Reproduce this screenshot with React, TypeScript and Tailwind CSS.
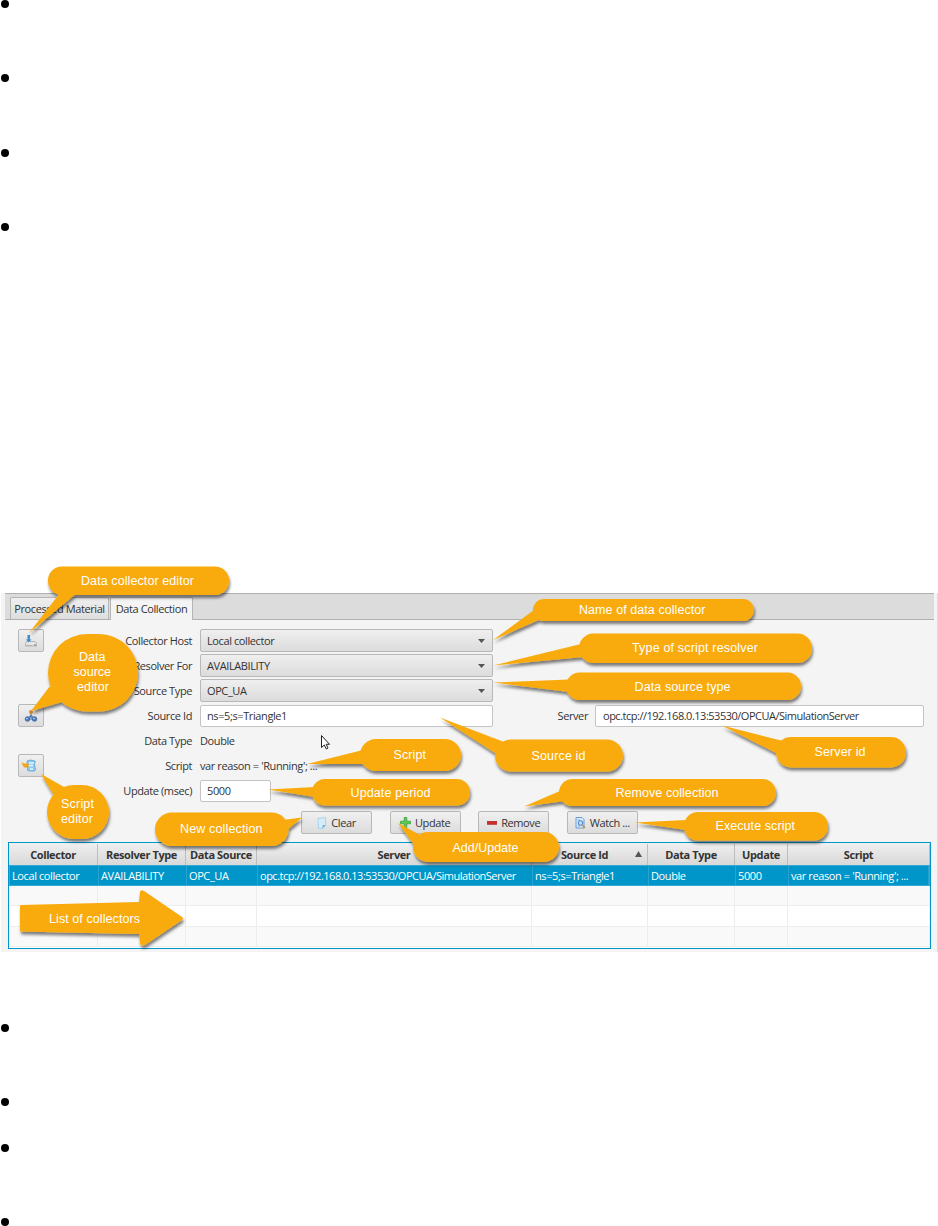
import type { ReactNode } from 'react'

const fields = [
  { label: 'Collector Host', value: 'Local collector' },
  { label: 'Resolver For', value: 'AVAILABILITY' },
  { label: 'Source Type', value: 'OPC_UA' },
]

const columns = [
  { title: 'Collector', value: 'Local collector' },
  { title: 'Resolver Type', value: 'AVAILABILITY' },
  { title: 'Data Source', value: 'OPC_UA' },
  { title: 'Server', value: 'opc.tcp://192.168.0.13:53530/OPCUA/SimulationServer' },
  { title: 'Source Id', value: 'ns=5;s=Triangle1', sorted: true },
  { title: 'Data Type', value: 'Double' },
  { title: 'Update', value: '5000' },
  { title: 'Script', value: "var reason = 'Running'; ..." },
]

const tableGrid = 'grid grid-cols-[89px_88px_71px_275px_116px_87px_53px_1fr]'

type Line = { text: string; x: number; y: number; w: number }
type Callout = {
  x: number
  y: number
  w: number
  h: number
  r: number
  tail: string
  lines: Line[]
}

// Coordinates are relative to the top left corner of the editor window
const callouts: Callout[] = [
  { x: 48, y: -26.5, w: 181, h: 28.5, r: 14, tail: '60,0 29,40 77,0', lines: [{ text: 'Data collector editor', x: 81, y: -8.5, w: 113 }] },
  { x: 48, y: 41, w: 90, h: 77.5, r: 39, tail: '50,93 31,118 62,109', lines: [
    { text: 'Data', x: 79, y: 68, w: 26.5 },
    { text: 'source', x: 73.5, y: 83, w: 37.5 },
    { text: 'editor', x: 77, y: 98, w: 32 },
  ] },
  { x: 47, y: 192, w: 62, h: 54, r: 27, tail: '53,201 41,181 64,194', lines: [
    { text: 'Script', x: 61, y: 215, w: 33 },
    { text: 'editor', x: 61, y: 230, w: 32 },
  ] },
  { x: 155, y: 219.5, w: 133.5, h: 33.5, r: 17, tail: '283,227 302,224.5 286,238', lines: [{ text: 'New collection', x: 180, y: 240, w: 82.5 }] },
  { x: 533, y: 6, w: 221, h: 22, r: 11, tail: '534,17 493,47 541,26 541,15', lines: [{ text: 'Name of data collector', x: 579, y: 20.5, w: 126.5 }] },
  { x: 579, y: 40.5, w: 233, h: 29.5, r: 14.5, tail: '581,51 493,72.5 583,64', lines: [{ text: 'Type of script resolver', x: 632, y: 59, w: 126 }] },
  { x: 566, y: 79.5, w: 235, h: 27.5, r: 13.5, tail: '569,86.5 493,89.5 569,99', lines: [{ text: 'Data source type', x: 634.5, y: 97.5, w: 96 }] },
  { x: 360, y: 146, w: 101, h: 32, r: 16, tail: '363,157 307,171 363,171', lines: [{ text: 'Script', x: 393.5, y: 166, w: 32.5 }] },
  { x: 495, y: 146.5, w: 128, h: 32, r: 16, tail: '504,149 440,124.5 498,162', lines: [{ text: 'Source id', x: 531.5, y: 166.5, w: 54 }] },
  { x: 776, y: 144, w: 130, h: 30.5, r: 15, tail: '783,148 722,132.5 778,161', lines: [{ text: 'Server id', x: 814.5, y: 162.5, w: 51 }] },
  { x: 312, y: 186, w: 158, h: 26.5, r: 13, tail: '315,194 268,196.5 315,204', lines: [{ text: 'Update period', x: 350.5, y: 204, w: 80 }] },
  { x: 559, y: 186, w: 217, h: 27, r: 13.5, tail: '560,198 524,213.5 565,208', lines: [{ text: 'Remove collection', x: 615.5, y: 204, w: 103 }] },
  { x: 684, y: 219, w: 144, h: 28.5, r: 14, tail: '686,227 635,229.5 686,237', lines: [{ text: 'Execute script', x: 715.5, y: 237, w: 79.5 }] },
  { x: 413, y: 239, w: 146, h: 30, r: 15, tail: '420,242 398,230 414,252', lines: [{ text: 'Add/Update', x: 452.5, y: 258.5, w: 66 }] },
]

function CalloutLayer() {
  return (
    <svg
      className="absolute top-0 left-0 overflow-visible pointer-events-none font-['Liberation_Sans',Arial,sans-serif] text-[12.5px] tracking-normal"
      width="938"
      height="359"
    >
      <defs>
        <filter id="callout-shadow" x="-20%" y="-30%" width="140%" height="170%">
          <feDropShadow dx="1" dy="3" stdDeviation="1.5" floodColor="#000" floodOpacity="0.5" />
        </filter>
      </defs>
      {callouts.map((c, i) => (
        <g key={i}>
          <g fill="#f9ab0a" filter="url(#callout-shadow)">
            <rect x={c.x} y={c.y} width={c.w} height={c.h} rx={c.r} />
            <polygon points={c.tail} />
          </g>
          {c.lines.map((line) => (
            <text key={line.text} x={line.x} y={line.y} textLength={line.w} fill="#fff">
              {line.text}
            </text>
          ))}
        </g>
      ))}
      <path
        d="M21 312 L139 309 L140 299 Q141 296 144 298 L182 324 Q184 325.500 182 327 L145 352 Q141 354 140 350 L139 341 L21 338.500 Q20 338.500 20 337.500 V313 Q20 312 21 312 Z"
        fill="#f9ab0a"
        filter="url(#callout-shadow)"
      />
      <text x="49" y="329.500" textLength="91" fill="#fff">List of collectors</text>
      {/* Mouse pointer */}
      <path
        d="M321.500 142.500 V154.500 L324.300 152 L326.300 156 L328 155 L326.200 151.300 H329.500 Z"
        fill="#fff"
        stroke="#222"
        strokeWidth="1"
      />
    </svg>
  )
}

function CollectorIcon() {
  return (
    <svg width="14" height="14" viewBox="0 0 14 14">
      <path d="M2.500 7.500 H11 L12.500 9.500 V12 H1.500 V9.500 Z" fill="#e6e6e6" stroke="#a5a5a5" strokeWidth="0.700" />
      <path d="M2 11.500 H8" stroke="#b5b5b5" />
      <path d="M10 11 H12" stroke="#777" />
      <path d="M3.500 1 H6 V5.500 H7.500 L4.700 8.500 L2 5.500 H3.500 Z" fill="#3d8fd1" />
    </svg>
  )
}

function SourceIcon() {
  return (
    <svg width="14" height="14" viewBox="0 0 14 14">
      <path d="M7 4 V7 M7 6 L3 10 M7 6 L11 10 M3 10 H11" stroke="#56709c" fill="none" />
      <circle cx="7" cy="3" r="2" fill="#d9892b" />
      <circle cx="3.500" cy="10" r="2.300" fill="#4c7fc4" stroke="#2d5793" strokeWidth="0.700" />
      <circle cx="10.500" cy="10" r="2.300" fill="#4c7fc4" stroke="#2d5793" strokeWidth="0.700" />
      <circle cx="7" cy="7.500" r="1.500" fill="#5b84bb" />
      <circle cx="3" cy="9.500" r="0.800" fill="#c8dcf5" />
      <circle cx="10" cy="9.500" r="0.800" fill="#c8dcf5" />
    </svg>
  )
}

function ScriptIcon() {
  return (
    <svg className="-ml-[4px] shrink-0" width="16" height="14" viewBox="0 0 16 14">
      <path d="M6 2 L9 1 L14 2 Q15 3 13.500 4.500 L14 8.500 Q15.500 10.500 13.500 12 H8 Q5.500 11.500 6.500 9.500 Z" fill="#8fcbee" stroke="#58a5d3" strokeWidth="0.800" />
      <path d="M8 4 H13 M8 6.500 H12 M9 10 H12" stroke="#e3f4fd" strokeWidth="1.300" />
      <path d="M0.500 3 L3 4.500 H7.500 V8.500 H3.500 L2 7 Z" fill="#f2a516" />
    </svg>
  )
}

function ToolButton({ children }: { children: ReactNode }) {
  return (
    <button className="w-[26px] h-[23px] flex items-center justify-center rounded-[2px] border border-[#b8b8b8] bg-linear-to-b from-[#f0f0f0] to-[#dcdcdc]">
      {children}
    </button>
  )
}

function ActionButton({ icon, label }: { icon: ReactNode; label: string }) {
  return (
    <button className="w-[71px] h-[23px] flex items-center justify-center gap-[4px] rounded-[2px] border border-[#b8b8b8] bg-linear-to-b from-[#f0f0f0] to-[#dcdcdc] whitespace-nowrap">
      {icon}
      {label}
    </button>
  )
}

function FormRow({ label, children }: { label: string; children: ReactNode }) {
  return (
    <div className="flex h-[25px] items-center">
      <span className="w-[192px] text-right mr-[8px]">{label}</span>
      {children}
    </div>
  )
}

function TabBar() {
  return (
    <div className="ml-[5px] mr-[3px] h-[27px] flex items-end gap-px pl-[5px] bg-[#dcdcdc] border-y border-[#b0b0b0]">
      <div className="w-[99px] h-[22px] flex items-center justify-center border border-b-0 border-[#b5b5b5] rounded-t-[2px] bg-linear-to-b from-[#efefef] to-[#dedede] whitespace-nowrap">
        Processed Material
      </div>
      <div className="w-[83px] h-[23px] -mb-px flex items-center justify-center border border-b-0 border-[#b5b5b5] rounded-t-[2px] bg-[#f4f4f4] whitespace-nowrap">
        Data Collection
      </div>
    </div>
  )
}

function CollectorTable() {
  return (
    <div className="ml-[8px] w-[923px] h-[107px] border border-[#0096c9] bg-white">
      <div className={`${tableGrid} h-[22px] pt-px bg-linear-to-b from-[#f0f0f0] to-[#d8d8d8] font-bold`}>
        {columns.map((col) => (
          <div key={col.title} className="relative flex items-center justify-center border-r border-[#bdbdbd]">
            <span className={col.sorted ? 'mr-[10px]' : ''}>{col.title}</span>
            {col.sorted && (
              <svg className="absolute right-[5px] top-[7px]" width="7" height="6" viewBox="0 0 7 6">
                <path d="M3.500 0 L7 6 H0 Z" fill="#555" />
              </svg>
            )}
          </div>
        ))}
      </div>
      <div className={`${tableGrid} h-[21px] bg-[#0096c9] border border-[#35a9d6] text-white`}>
        {columns.map((col) => (
          <div
            key={col.title}
            className={`flex items-center pl-[2px] border-r border-[#2aa2cf] whitespace-nowrap ${col.title === 'Server' ? 'tracking-[-0.49px]' : ''}`}
          >
            {col.value}
          </div>
        ))}
      </div>
      {['bg-[#f9f9f9]', 'bg-white', 'bg-[#f9f9f9]'].map((bg, i) => (
        <div key={i} className={`${tableGrid} ${bg} ${i === 1 ? 'h-[21px]' : 'h-[20px]'} border-b border-[#ededed]`}>
          {columns.map((col) => (
            <div key={col.title} className="border-r border-[#ededed]" />
          ))}
        </div>
      ))}
    </div>
  )
}

const clearIcon = (
  <svg width="10" height="12" viewBox="0 0 10 12">
    <path d="M1 1.500 L8.500 0.500 V8.500 L6 11.500 H1.500 Z" fill="#d5ecfa" stroke="#9ccbe8" strokeWidth="0.800" />
    <path d="M5 11.500 L6 8 H8.500 Z" fill="#58a9dc" />
  </svg>
)

const addIcon = (
  <svg width="11" height="11" viewBox="0 0 11 11">
    <path d="M4.200 0.500 H6.800 V4.200 H10.500 V6.800 H6.800 V10.500 H4.200 V6.800 H0.500 V4.200 H4.200 Z" fill="#5ccb4f" stroke="#2f9a35" strokeWidth="0.700" />
  </svg>
)

const removeIcon = (
  <svg width="10" height="4" viewBox="0 0 10 4">
    <rect x="0.300" y="0.300" width="9.400" height="3" fill="#cf2c2c" stroke="#a81e22" strokeWidth="0.600" />
  </svg>
)

const watchIcon = (
  <svg width="11" height="12" viewBox="0 0 11 12">
    <path d="M1 0.500 H7 L9 2.500 V11 H1 Z" fill="#dcecfb" stroke="#5d93cf" strokeWidth="0.900" />
    <path d="M2.500 3 H5 M2.500 9 H5" stroke="#7fa9d8" />
    <circle cx="5.500" cy="6" r="2.300" fill="#bfe0fa" stroke="#3f7cc4" />
    <path d="M7.300 8 L10 11" stroke="#c09254" strokeWidth="1.500" />
  </svg>
)

function BulletList({ heights }: { heights: string[] }) {
  return (
    <ul className="list-none">
      {heights.map((height, i) => (
        <li key={i} className={height}>
          <div className="w-[8px] h-[8px] ml-[0.5px] rounded-full bg-black" />
        </li>
      ))}
    </ul>
  )
}

export default function App() {
  return (
    <div className="w-[938px] h-[1226px] overflow-hidden bg-white">
      <div className="h-[593px]">
        <BulletList heights={['h-[74px]', 'h-[75px]', 'h-[74px]', 'h-[74px]']} />
      </div>

      <section className="relative h-[359px] font-['Open_Sans','Noto_Sans',sans-serif] text-[11px] leading-[14px] tracking-[-0.4px] text-[#333]">
        <div className="ml-px h-full bg-[#f4f4f4] border-r border-[#dcdcdc]">
          <div className="-ml-px">
            <TabBar />

            {/* Collector form */}
            <div className="flex h-[183px] pt-[8px]">
              <div className="w-0 flex flex-col pl-[18px] pt-px">
                <ToolButton><CollectorIcon /></ToolButton>
                <div className="h-[52px]" />
                <ToolButton><SourceIcon /></ToolButton>
                <div className="h-[27px]" />
                <ToolButton><ScriptIcon /></ToolButton>
              </div>
              <div className="-ml-[18px] w-[938px]">
                {fields.map((field) => (
                  <FormRow key={field.label} label={field.label}>
                    <div className="w-[293px] h-[23px] flex items-center justify-between pl-[6px] pr-[7px] rounded-[2px] border border-[#b8b8b8] bg-linear-to-b from-[#efefef] to-[#dcdcdc]">
                      {field.value}
                      <svg width="7" height="4" viewBox="0 0 7 4">
                        <path d="M0 0 H7 L3.500 4 Z" fill="#555" />
                      </svg>
                    </div>
                  </FormRow>
                ))}
                <FormRow label="Source Id">
                  <div className="w-[293px] h-[22px] flex items-center pl-[6px] rounded-[2px] border border-[#c4c4c4] bg-white">
                    ns=5;s=Triangle1
                  </div>
                  <span className="w-[95px] text-right mr-[7px]">Server</span>
                  <div className="w-[329px] h-[22px] flex items-center pl-[7px] rounded-[2px] border border-[#c4c4c4] bg-white tracking-[-0.49px]">
                    opc.tcp://192.168.0.13:53530/OPCUA/SimulationServer
                  </div>
                </FormRow>
                <FormRow label="Data Type">Double</FormRow>
                <FormRow label="Script">var reason = &apos;Running&apos;; ...</FormRow>
                <FormRow label="Update (msec)">
                  <div className="w-[71px] h-[22px] flex items-center pl-[6px] rounded-[2px] border border-[#c4c4c4] bg-white">
                    5000
                  </div>
                </FormRow>
              </div>
            </div>

            <div className="flex gap-[17.6px] pl-[301px] pt-[8px] h-[39px]">
              <ActionButton icon={clearIcon} label="Clear" />
              <ActionButton icon={addIcon} label="Update" />
              <ActionButton icon={removeIcon} label="Remove" />
              <ActionButton icon={watchIcon} label="Watch ..." />
            </div>

            <CollectorTable />
          </div>
        </div>
        <CalloutLayer />
      </section>

      <div className="pt-[72px]">
        <BulletList heights={['h-[74px]', 'h-[46px]', 'h-[74px]', 'h-[8px]']} />
      </div>
    </div>
  )
}
